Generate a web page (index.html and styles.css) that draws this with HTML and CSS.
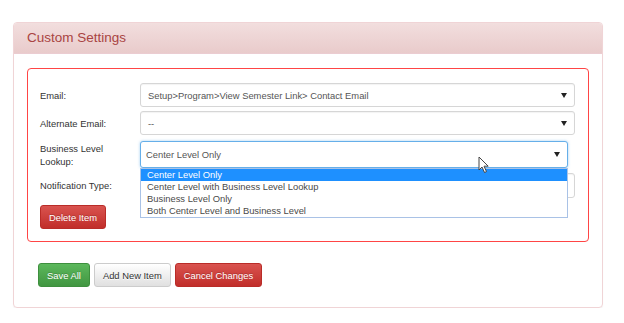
FILE: index.html
```html
<!DOCTYPE html>
<html lang="en">
<head>
    <meta charset="UTF-8">
    <meta name="viewport" content="width=device-width, initial-scale=1.0">
    <title>Custom Settings</title>
    <link rel="stylesheet" href="styles.css">
</head>
<body>

    <div class="panel">
        <div class="panel-heading">Custom Settings</div>
        <div class="panel-body">

            <div class="item-box">
                <div class="row row-email">
                    <label>Email:</label>
                    <div class="select"><span>Setup&gt;Program&gt;View Semester Link&gt; Contact Email</span><i class="caret"></i></div>
                </div>
                <div class="row row-alt">
                    <label>Alternate Email:</label>
                    <div class="select"><span>--</span><i class="caret"></i></div>
                </div>
                <div class="row row-lookup">
                    <label>Business Level<br>Lookup:</label>
                    <div class="select select-open"><span>Center Level Only</span><i class="caret"></i>
                        <ul class="dropdown">
                            <li class="active">Center Level Only</li>
                            <li>Center Level with Business Level Lookup</li>
                            <li>Business Level Only</li>
                            <li>Both Center Level and Business Level</li>
                        </ul>
                    </div>
                </div>
                <div class="row row-notify">
                    <label>Notification Type:</label>
                    <div class="select"><span></span><i class="caret"></i></div>
                </div>
                <div class="item-actions">
                    <button class="btn btn-danger">Delete Item</button>
                </div>
            </div>

            <div class="panel-actions">
                <button class="btn btn-success">Save All</button>
                <button class="btn btn-default">Add New Item</button>
                <button class="btn btn-danger">Cancel Changes</button>
            </div>

        </div>
    </div>

    <!-- mouse pointer sitting over the open list -->
    <svg class="cursor" width="12" height="18" viewBox="0 0 12 18">
        <path d="M1 1 L1 14 L4 11 L6.5 16.5 L8.5 15.6 L6 10.2 L10.2 10.2 Z" fill="#fff" stroke="#444" stroke-width="1" stroke-linejoin="round"/>
    </svg>

</body>
</html>
```

FILE: styles.css
```css
body {
    margin: 0;
    font-family: "Liberation Sans", Arial, sans-serif;
    font-size: 9.4px;
    color: #333;
    background: #fff;
}
.panel {
    width: 588px;
    margin: 22px 0 0 13px;
    border: 1px solid #f0d4d6;
    border-radius: 4px;
    box-shadow: 0 1px 1px rgba(0, 0, 0, 0.05);
}
.panel-heading {
    height: 30px;
    line-height: 30px;
    padding: 0 13px;
    font-size: 13.5px;
    color: #a94442;
    background: linear-gradient(#f2dede, #e9cbcb);
    border-bottom: 1px solid #ebccd1;
    border-radius: 3px 3px 0 0;
}
.panel-body {
    padding: 14px 13px 20px 13px;
}
.item-box {
    border: 1px solid #ff4545;
    border-radius: 4px;
    padding: 14px 13px 12px 12px;
}
.row {
    display: flex;
    align-items: center;
}
.row label {
    width: 100px;
    flex-shrink: 0;
    line-height: 13px;
}
.row-alt { margin-top: 4px; }
.row-lookup { margin-top: 6px; }
.row-notify { margin-top: 5px; }
.select {
    position: relative;
    flex: 1;
    height: 22px;
    border: 1px solid #d6d6d6;
    border-radius: 3px;
    background: #fff;
    color: #555;
    display: flex;
    align-items: center;
    padding-left: 7px;
    box-shadow: inset 0 1px 1px rgba(0, 0, 0, 0.05);
}
.select span {
    flex: 1;
}
.caret {
    width: 0;
    height: 0;
    margin-right: 7px;
    border-left: 3px solid transparent;
    border-right: 3px solid transparent;
    border-top: 5px solid #222;
}
.row-notify .select {
    height: 23px;
}
.select-open {
    height: 25px;
    margin-right: 7px;
    padding-left: 5px;
    border-color: #66afe9;
    box-shadow: 0 0 3px rgba(102, 175, 233, 0.6);
}
.dropdown {
    position: absolute;
    top: 100%;
    left: -1px;
    right: -1px;
    margin: 1px 0 0 0;
    padding: 0;
    list-style: none;
    background: #fff;
    border: 1px solid #a9c2e6;
    z-index: 2;
}
.dropdown li {
    height: 12px;
    line-height: 12px;
    padding-left: 6px;
    color: #4a4a4a;
}
.dropdown li.active {
    background: #1e90ff;
    color: #fff;
}
.item-actions {
    margin-top: 7px;
}
.btn {
    height: 24px;
    padding: 0 8px;
    font-family: "Liberation Sans", Arial, sans-serif;
    font-size: 9.4px;
    border-radius: 3px;
    border: 1px solid;
    cursor: pointer;
}
.btn-danger {
    color: #fff;
    background: linear-gradient(#d9534f, #c12e2a);
    border-color: #b92c28;
    text-shadow: 0 -1px 0 rgba(0, 0, 0, 0.2);
}
.btn-success {
    color: #fff;
    background: linear-gradient(#5cb85c, #419641);
    border-color: #3e8f3e;
    text-shadow: 0 -1px 0 rgba(0, 0, 0, 0.2);
}
.btn-default {
    color: #333;
    background: linear-gradient(#fff, #e0e0e0);
    border-color: #ccc;
    text-shadow: 0 1px 0 #fff;
}
.panel-actions {
    display: flex;
    gap: 4px;
    margin: 21px 0 0 11px;
}
.cursor {
    position: absolute;
    left: 478px;
    top: 156px;
    z-index: 3;
}
```
